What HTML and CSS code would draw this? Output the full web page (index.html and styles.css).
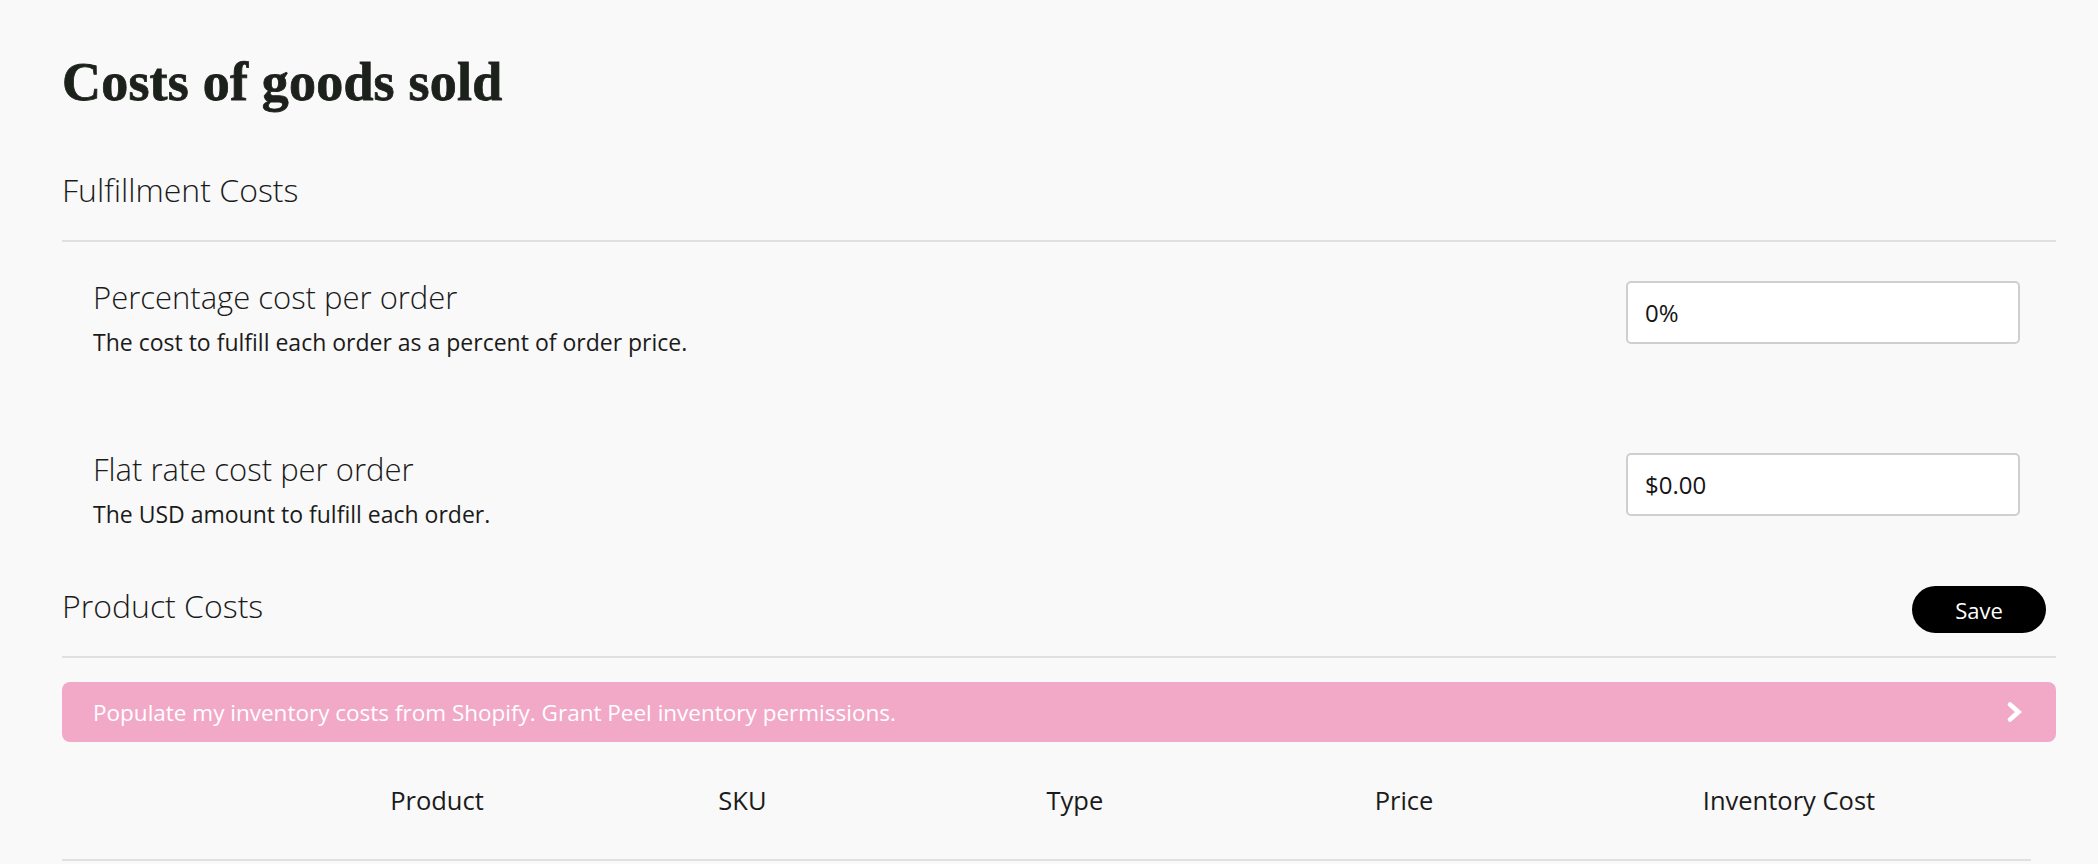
FILE: index.html
```html
<!DOCTYPE html>
<html lang="en">
<head>
<meta charset="utf-8">
<title>Costs of goods sold</title>
<link rel="stylesheet" href="styles.css">
</head>
<body>
<main class="page">
  <h1 class="page-title">Costs of goods sold</h1>

  <section class="section">
    <div class="section-header">
      <h2 class="section-title">Fulfillment Costs</h2>
    </div>
    <div class="setting-row">
      <div class="setting-text">
        <div class="setting-label">Percentage cost per order</div>
        <div class="setting-desc">The cost to fulfill each order as a percent of order price.</div>
      </div>
      <input class="setting-input" type="text" value="0%">
    </div>
    <div class="setting-row">
      <div class="setting-text">
        <div class="setting-label">Flat rate cost per order</div>
        <div class="setting-desc">The USD amount to fulfill each order.</div>
      </div>
      <input class="setting-input" type="text" value="$0.00">
    </div>
  </section>

  <section class="section">
    <div class="section-header">
      <h2 class="section-title">Product Costs</h2>
      <button class="save-btn" type="button">Save</button>
    </div>
    <a class="banner" href="#">
      <span class="banner-text">Populate my inventory costs from Shopify. Grant Peel inventory permissions.</span>
      <svg class="banner-chevron" width="17" height="24" viewBox="0 0 17 24" aria-hidden="true">
        <polyline points="4,4.5 12.5,12 4,19.5" fill="none" stroke="#fff" stroke-width="4.6" stroke-linecap="round" stroke-linejoin="miter"/>
      </svg>
    </a>
    <table class="cost-table">
      <thead>
        <tr>
          <th></th>
          <th>Product</th>
          <th>SKU</th>
          <th>Type</th>
          <th>Price</th>
          <th>Inventory Cost</th>
        </tr>
      </thead>
    </table>
  </section>
</main>
</body>
</html>
```

FILE: styles.css
```css
html, body {
  margin: 0;
  padding: 0;
  background: #f9f9f9;
}

body {
  font-family: "Open Sans", "Noto Sans", sans-serif;
  color: #1b1b1b;
}

.page {
  padding: 49px 42px 0 62px;
}

.page-title {
  margin: 0;
  font-family: "Liberation Serif", "Times New Roman", serif;
  font-weight: 700;
  font-size: 54px;
  line-height: 66px;
  color: #1c211c;
  -webkit-text-stroke: 0.8px #1c211c;
  letter-spacing: 0.2px;
}

.section:first-of-type {
  margin-top: 55px;
}

.section-header {
  display: flex;
  justify-content: space-between;
  align-items: flex-start;
  min-height: 47px;
  padding-bottom: 23px;
  border-bottom: 2px solid #e3dfdf;
}

.section-title {
  margin: 0;
  font-weight: 300;
  font-size: 32px;
  line-height: 39px;
  color: #1b1b1b;
}

.setting-row {
  display: flex;
  justify-content: space-between;
  align-items: flex-start;
  padding: 35px 36px 57px 31px;
}

.setting-label {
  font-weight: 300;
  font-size: 31px;
  line-height: 40px;
}

.setting-desc {
  margin-top: 10px;
  font-size: 23px;
  line-height: 30px;
  color: #1b1b1b;
}

.setting-input {
  box-sizing: border-box;
  width: 394px;
  height: 63px;
  margin-top: 4px;
  padding: 0 17px;
  border: 2px solid #cfcfcf;
  border-radius: 5px;
  background: #fff;
  font-family: "Open Sans", "Noto Sans", sans-serif;
  font-size: 24px;
  color: #151515;
  outline: none;
}

.save-btn {
  box-sizing: border-box;
  width: 134px;
  height: 47px;
  margin-right: 10px;
  border: none;
  border-radius: 24px;
  background: #000;
  color: #fff;
  font-family: "Open Sans", "Noto Sans", sans-serif;
  font-size: 22px;
  cursor: pointer;
}

.banner {
  display: flex;
  align-items: center;
  justify-content: space-between;
  height: 60px;
  margin-top: 24px;
  padding: 0 33px 0 31px;
  border-radius: 8px;
  background: #f2a9c7;
  color: #fff;
  text-decoration: none;
  font-size: 22.5px;
}

.cost-table {
  width: 1969px;
  margin-top: 23px;
  border-collapse: collapse;
  table-layout: fixed;
}

.cost-table th {
  padding: 18px 0 42px 0;
  text-align: left;
  font-weight: 400;
  font-size: 25.5px;
  line-height: 34px;
  color: #1b1b1b;
  border-bottom: 2px solid #e3dfdf;
}
```
